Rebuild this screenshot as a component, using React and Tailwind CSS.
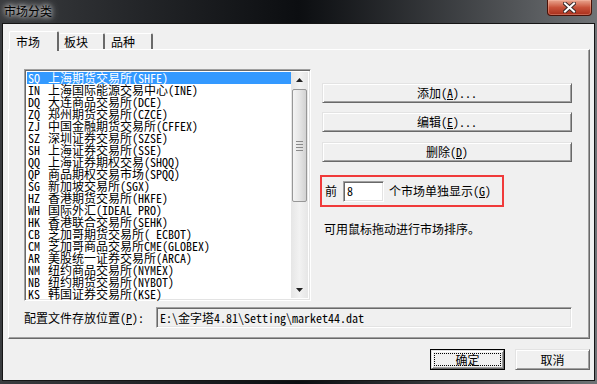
import React from 'react';

const rows = [
  ['SQ', '上海期货交易所(SHFE)'],
  ['IN', '上海国际能源交易中心(INE)'],
  ['DQ', '大连商品交易所(DCE)'],
  ['ZQ', '郑州期货交易所(CZCE)'],
  ['ZJ', '中国金融期货交易所(CFFEX)'],
  ['SZ', '深圳证券交易所(SZSE)'],
  ['SH', '上海证券交易所(SSE)'],
  ['QQ', '上海证券期权交易(SHQQ)'],
  ['QP', '商品期权交易市场(SPQQ)'],
  ['SG', '新加坡交易所(SGX)'],
  ['HZ', '香港期货交易所(HKFE)'],
  ['WH', '国际外汇(IDEAL PRO)'],
  ['HK', '香港联合交易所(SEHK)'],
  ['CB', '芝加哥期货交易所( ECBOT)'],
  ['CM', '芝加哥商品交易所CME(GLOBEX)'],
  ['AR', '美股统一证券交易所(ARCA)'],
  ['NM', '纽约商品交易所(NYMEX)'],
  ['NB', '纽约期货交易所(NYBOT)'],
  ['KS', '韩国证券交易所(KSE)'],
];

// classic 3d edges
const sunken =
  'border border-t-[#a0a0a0] border-l-[#a0a0a0] border-r-white border-b-white shadow-[inset_1px_1px_0_#696969,inset_-1px_-1px_0_#e3e3e3]';
const raised =
  'border border-t-[#e3e3e3] border-l-[#e3e3e3] border-r-[#696969] border-b-[#696969] shadow-[inset_1px_1px_0_#fff,inset_-1px_-1px_0_#a0a0a0]';

function Arrow({ down }) {
  return (
    <svg width="7" height="4" viewBox="0 0 7 4">
      <path d={down ? 'M0 0h7L3.5 4z' : 'M0 4h7L3.5 0z'} fill="#222" />
    </svg>
  );
}

function ScrollBar() {
  return (
    <div className="w-[17px] flex flex-col bg-gradient-to-r from-[#e6e6e6] via-[#f2f2f2] to-[#e6e6e6]">
      <div className="h-[17px] flex items-center justify-center">
        <Arrow />
      </div>
      <div className="flex-1 px-[1px] pt-[1px] pb-[80px]">
        <div className="h-[113px] rounded-[2px] border border-[#979797] bg-gradient-to-r from-[#f4f4f4] via-[#e6e6e6] to-[#d2d2d2] flex flex-col items-center justify-center gap-[2px]">
          <div className="w-[7px] h-[1px] bg-[#8a8a8a]" />
          <div className="w-[7px] h-[1px] bg-[#8a8a8a]" />
          <div className="w-[7px] h-[1px] bg-[#8a8a8a]" />
          <div className="w-[7px] h-[1px] bg-[#8a8a8a]" />
        </div>
      </div>
      <div className="h-[17px] flex items-center justify-center">
        <Arrow down />
      </div>
    </div>
  );
}

function Button({ children, className = '' }) {
  return (
    <div className={`${raised} bg-[#f0f0f0] flex items-center justify-center ${className}`}>
      {children}
    </div>
  );
}

export default function App() {
  return (
    <div className="w-[597px] h-[384px] flex flex-col bg-gradient-to-r from-[#3a3c3f] via-[#0c0e11] to-[#707376] px-[2px] pb-[3px] text-[12px] leading-[12px] text-black font-['Noto_Sans_Mono_CJK_SC','Noto_Sans_CJK_SC',monospace]">
      {/* title bar */}
      <div className="h-[23px] -mx-[2px] flex items-start justify-between">
        <div className="pl-[4px] pt-[4px] text-[12px] leading-[14px] font-['Noto_Sans_CJK_SC',sans-serif] text-black [text-shadow:0_0_5px_#fff,0_0_9px_#ddd]">
          市场分类
        </div>
        <div className="mr-[5px] w-[45px] h-[16px] rounded-b-[4px] border border-t-0 border-[#4a1208] bg-gradient-to-b from-[#e9a58f] via-[#c8523a] to-[#a72d1a] flex items-center justify-center shadow-[inset_0_0_0_1px_rgba(255,200,180,0.35)]">
          <svg width="13" height="11" viewBox="0 0 13 11">
            <path d="M2 1.5l9 8M11 1.5l-9 8" stroke="#3b2a28" strokeWidth="4" strokeLinecap="square" />
            <path d="M2 1.5l9 8M11 1.5l-9 8" stroke="#fff" strokeWidth="2" strokeLinecap="square" />
          </svg>
        </div>
      </div>

      {/* client area */}
      <div className="flex-1 flex flex-col bg-[#f0f0f0] border border-[#151515]">
        {/* tabs */}
        <div className="h-[18px] mt-[7px] pl-[6px] flex items-end">
          <div className="relative z-10 w-[50px] h-[20px] -mb-[2px] bg-[#f0f0f0] border-t border-l border-white border-r-2 border-r-[#696969] rounded-t-[2px] pt-[4px] pl-[6px] text-[12px] leading-[12px]">
            市场
          </div>
          <div className="w-[46px] h-[16px] bg-[#f0f0f0] border-t border-white border-r-2 border-r-[#696969] rounded-t-[2px] pt-[2px] pl-[5px]">
            板块
          </div>
          <div className="w-[48px] h-[16px] bg-[#f0f0f0] border-t border-white border-r-2 border-r-[#696969] rounded-t-[2px] pt-[2px] pl-[6px]">
            品种
          </div>
        </div>

        {/* panel */}
        <div className="ml-[5px] mr-[4px] h-[290px] border border-t-white border-l-white border-r-[#696969] border-b-[#696969] shadow-[inset_-1px_-1px_0_#a0a0a0] pt-[19px] pl-[15px] pr-[17px] flex flex-col">
          <div className="flex">
            {/* list */}
            <div className={`${sunken} w-[287px] h-[232px] bg-white flex p-[2px]`}>
              <div className="flex-1 flex flex-col">
                {rows.map(([code, name], i) => (
                  <div
                    key={code}
                    className={`h-[12px] pl-[1px] flex whitespace-nowrap ${i === 0 ? 'bg-[#3399ff] text-white' : ''}`}
                  >
                    <span className="w-[20px] shrink-0">{code}</span>
                    <span>{name}</span>
                  </div>
                ))}
              </div>
              <ScrollBar />
            </div>

            {/* right column */}
            <div className="ml-[11px] flex-1 pt-[14px] flex flex-col">
              <Button className="h-[20px]">
                添加(<u>A</u>)...
              </Button>
              <Button className="h-[20px] mt-[9px]">
                编辑(<u>E</u>)...
              </Button>
              <Button className="h-[20px] mt-[10px]">
                删除(<u>D</u>)
              </Button>

              <div className="mt-[13px] -ml-[2px] w-[184px] h-[32px] border-2 border-[#f03a3a] flex items-center pl-[3px]">
                <span>前</span>
                <div className={`${sunken} ml-[6px] w-[41px] h-[21px] bg-white flex items-center pl-[3px]`}>
                  8
                </div>
                <span className="ml-[5px]">
                  个市场单独显示(<u>G</u>)
                </span>
              </div>

              <div className="mt-[16px] ml-[2px]">可用鼠标拖动进行市场排序。</div>
            </div>
          </div>

          {/* path row */}
          <div className="mt-[6px] flex items-center">
            <div className="w-[132px] pl-[0px]">
              配置文件存放位置(<u>P</u>):
            </div>
            <div className={`${sunken} flex-1 h-[21px] flex items-center pl-[3px] whitespace-nowrap`}>
              E:\金字塔4.81\Setting\market44.dat
            </div>
          </div>
        </div>

        {/* bottom buttons */}
        <div className="mt-[10px] pr-[4px] flex justify-end gap-[10px]">
          <div className="w-[75px] h-[21px] border border-black">
            <Button className="h-full p-[2px]">
              <div className="w-full h-full border border-dotted border-black flex items-center justify-center">
                确定
              </div>
            </Button>
          </div>
          <Button className="w-[75px] h-[21px]">取消</Button>
        </div>
      </div>
    </div>
  );
}
